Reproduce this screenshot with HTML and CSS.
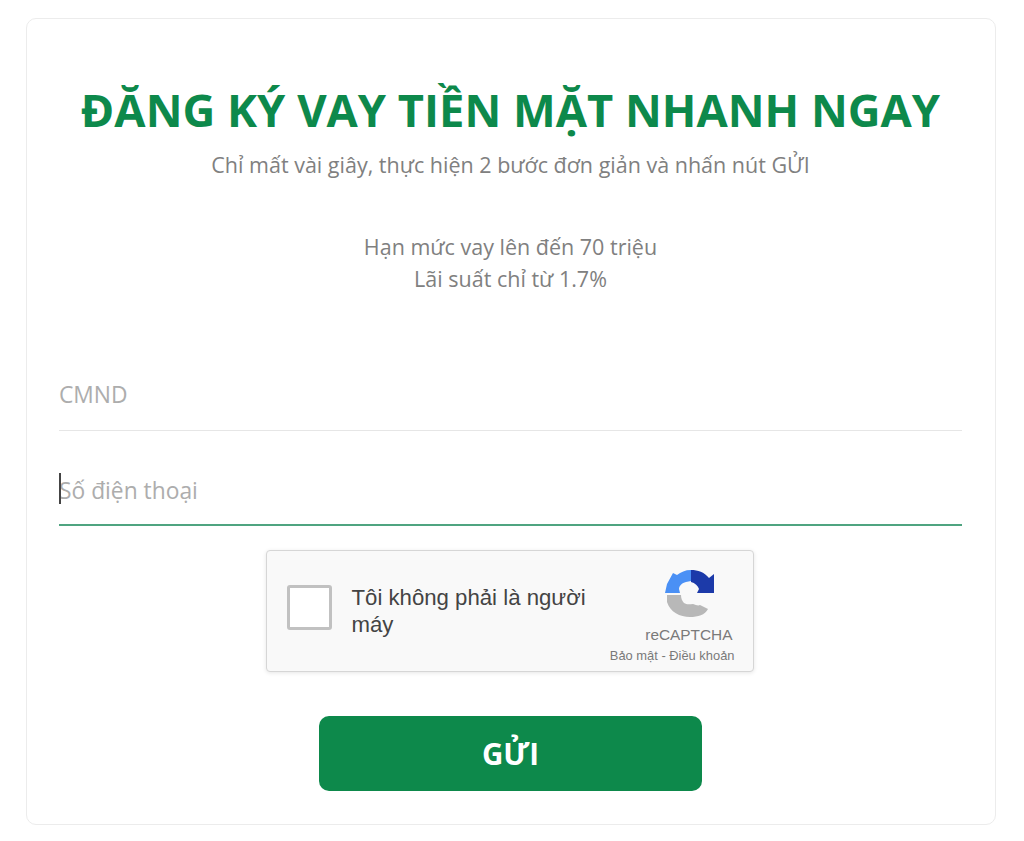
FILE: index.html
```html
<!DOCTYPE html>
<html lang="vi">
<head>
<meta charset="utf-8">
<title>Đăng ký vay tiền mặt</title>
<link rel="stylesheet" href="styles.css">
</head>
<body>
<main class="card">
  <h1 class="title">ĐĂNG KÝ VAY TIỀN MẶT NHANH NGAY</h1>
  <p class="subtitle">Chỉ mất vài giây, thực hiện 2 bước đơn giản và nhấn nút GỬI</p>
  <div class="offer">
    <p>Hạn mức vay lên đến 70 triệu</p>
    <p>Lãi suất chỉ từ 1.7%</p>
  </div>
  <form class="form">
    <div class="field"><span class="placeholder">CMND</span></div>
    <div class="field field-active"><span class="caret"></span><span class="placeholder">Số điện thoại</span></div>
    <div class="captcha">
      <span class="checkbox"></span>
      <span class="captcha-label">Tôi không phải là người máy</span>
      <div class="captcha-brand">
        <svg class="captcha-logo" viewBox="0 0 50 50" width="50" height="50" aria-hidden="true">
          <path fill="#4a90f5" d="M0 24 L2 15 L8 4 L12 6 C16 3 20 1 26 1 L26 12 L21 13 C17 14 14 17 14 20 L15 24 Z"/>
          <path fill="#1c3aa9" d="M26 1 C33 1 39 3 44 9 L49 5 L49 24 L32 24 L34 20 C33 17 30 14 26 13 Z"/>
          <path fill="#b8b8b8" d="M2 26 L16 26 C16 29 17 32 19 34 C22 36 25 35 28 35 C31 36 33 37 35 36 L43 40 C40 46 33 48 25 48 C15 48 5 43 2 33 Z"/>
        </svg>
        <span class="captcha-name">reCAPTCHA</span>
        <span class="captcha-links">Bảo mật - Điều khoản</span>
      </div>
    </div>
    <button class="submit" type="button">GỬI</button>
  </form>
</main>
</body>
</html>
```

FILE: styles.css
```css
* { box-sizing: border-box; }
html, body { margin: 0; padding: 0; background: #fff; }
body {
  width: 1024px;
  height: 841px;
  padding: 18px 28px 0 26px;
  font-family: "Open Sans", "Noto Sans", sans-serif;
  overflow: hidden;
}
.card {
  width: 970px;
  height: 807px;
  padding: 60px 33px 0 32px;
  border: 1px solid #ececec;
  border-radius: 10px;
  background: #fff;
  text-align: center;
}
.title {
  margin: 0 -10px;
  font-size: 45.3px;
  line-height: 62px;
  font-weight: 700;
  color: #0d894b;
  white-space: nowrap;
}
.subtitle {
  margin: 11px 0 0;
  font-size: 21.5px;
  line-height: 26px;
  color: #808080;
}
.offer {
  margin-top: 53px;
  font-size: 21.5px;
  line-height: 32px;
  color: #808080;
}
.offer p { margin: 0; }
.form { margin-top: 71px; display: flex; flex-direction: column; align-items: center; }
.field {
  position: relative;
  width: 100%;
  height: 65px;
  padding-bottom: 19px;
  border-bottom: 1px solid #e6e6e6;
  display: flex;
  align-items: flex-end;
  text-align: left;
}
.field + .field { height: 95px; padding-bottom: 17px; border-bottom: 2px solid #4fa480; }
.placeholder { font-size: 22.8px; line-height: 32px; color: #adadad; }
.caret {
  position: absolute;
  left: 0;
  bottom: 20px;
  width: 2px;
  height: 31px;
  background: #444;
}
.captcha {
  position: relative;
  width: 488px;
  height: 122px;
  margin: 24px 2px 0 0;
  background: #f9f9f9;
  border: 1px solid #d6d6d6;
  border-radius: 4px;
  box-shadow: 0 1px 4px rgba(0, 0, 0, .1);
  display: flex;
  align-items: center;
  text-align: left;
}
.checkbox {
  flex: none;
  width: 45px;
  height: 45px;
  margin: 0 0 8px 20px;
  background: #fff;
  border: 3px solid #c1c1c1;
  border-radius: 3px;
}
.captcha-label {
  width: 250px;
  margin-left: 20px;
  font-family: "Liberation Sans", Arial, sans-serif;
  font-size: 22.2px;
  line-height: 27px;
  color: #444;
}
.captcha-brand {
  position: absolute;
  right: 18px;
  top: 18px;
  width: 130px;
  display: flex;
  flex-direction: column;
  align-items: flex-end;
  font-family: "Liberation Sans", Arial, sans-serif;
  color: #7a7a7a;
}
.captcha-logo { margin-right: 20px; }
.captcha-name { margin-top: 8px; font-size: 15.4px; line-height: 16px; margin-right: 2px; }
.captcha-links { margin-top: 6px; font-size: 12.9px; line-height: 14px; white-space: nowrap; margin-right: 0; }
.submit {
  width: 383px;
  height: 75px;
  margin-top: 44px;
  padding: 0;
  border: 0;
  border-radius: 10px;
  background: #0d894b;
  color: #fff;
  font-family: inherit;
  font-size: 29.5px;
  font-weight: 700;
}
```
